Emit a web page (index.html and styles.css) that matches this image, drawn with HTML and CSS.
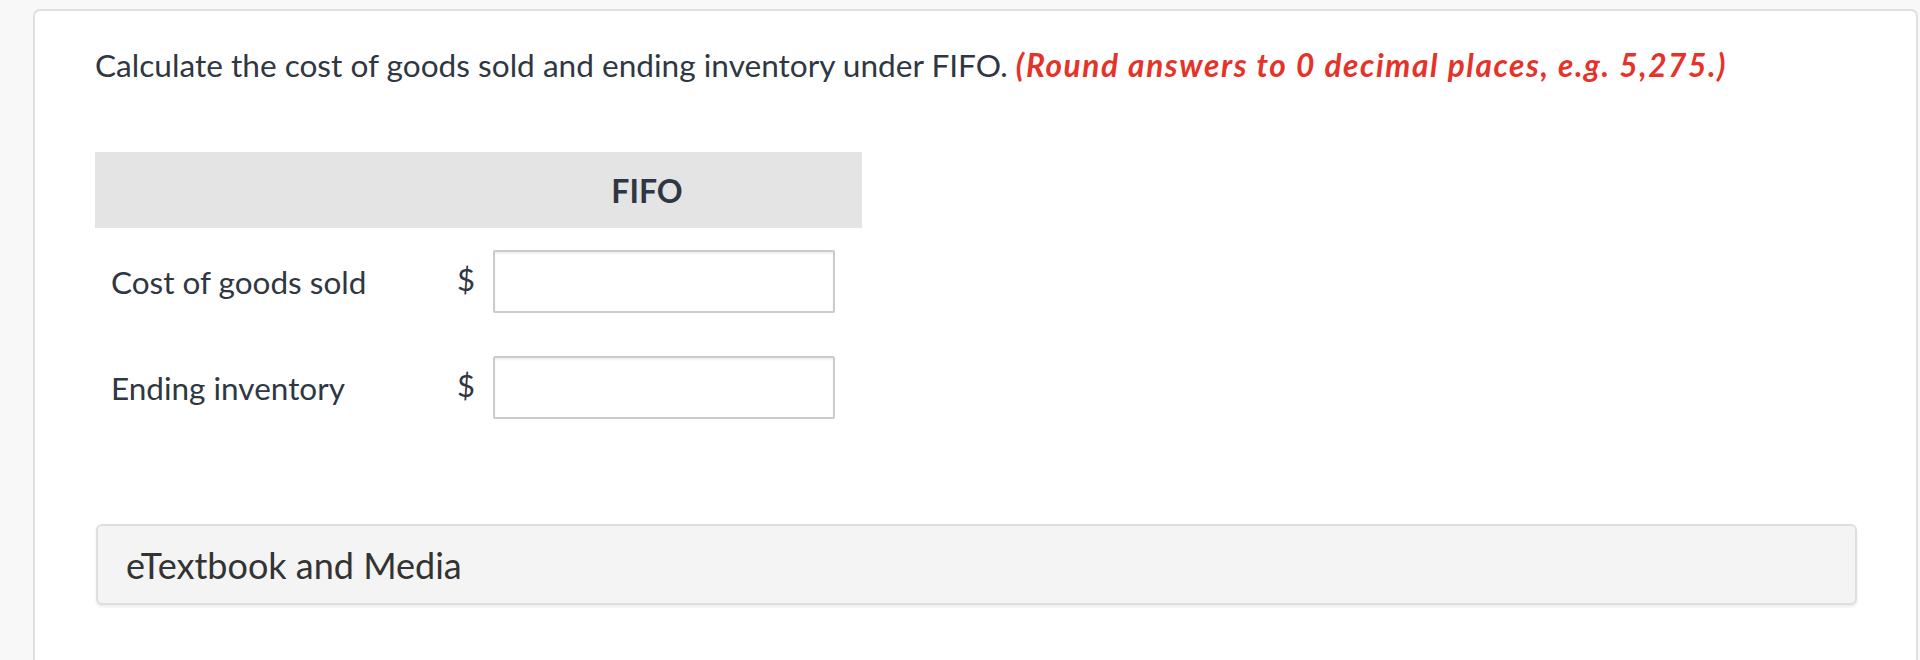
FILE: index.html
```html
<!DOCTYPE html>
<html lang="en">
<head>
<meta charset="utf-8">
<title>FIFO</title>
<link rel="stylesheet" href="styles.css">
</head>
<body>
<div class="page">
  <div class="card">
    <p class="question">Calculate the cost of goods sold and ending inventory under FIFO. <span class="hint">(Round answers to 0 decimal places, e.g. 5,275.)</span></p>
    <div class="table">
      <div class="head">
        <div class="head-label"></div>
        <div class="head-col">FIFO</div>
      </div>
      <div class="row">
        <div class="label">Cost of goods sold</div>
        <div class="cell"><span class="dollar">$</span><input class="field" type="text"></div>
      </div>
      <div class="row">
        <div class="label">Ending inventory</div>
        <div class="cell"><span class="dollar">$</span><input class="field" type="text"></div>
      </div>
    </div>
    <div class="media">eTextbook and Media</div>
  </div>
</div>
</body>
</html>
```
FILE: styles.css
```css
html, body {
  margin: 0;
  padding: 0;
  height: 100%;
  overflow: hidden;
}
body {
  background: #f8f8f8;
  font-family: Lato, "Open Sans", sans-serif;
  color: #2f3742;
}
.page {
  padding: 9px 2px 0 33px;
  height: 100%;
  box-sizing: border-box;
}
.card {
  background: #fff;
  border: 2px solid #e0e0e0;
  border-bottom: none;
  border-radius: 7px 7px 0 0;
  height: 100%;
  box-sizing: border-box;
  padding: 0 58px 0 60px;
}
.question {
  margin: 0;
  padding-top: 34px;
  font-size: 31.6px;
  line-height: 40px;
  white-space: nowrap;
}
.hint {
  color: #e6332a;
  font-weight: bold;
  font-style: italic;
  letter-spacing: 1.6px;
}
.table {
  width: 767px;
  margin-top: 67px;
}
.head {
  display: grid;
  grid-template-columns: 345px 422px;
  height: 76px;
  background: #e4e4e4;
  align-items: center;
}
.head-col {
  text-align: center;
  font-weight: bold;
  font-size: 32px;
  padding-right: 8px;
}
.row {
  display: grid;
  grid-template-columns: 345px 422px;
  align-items: center;
  padding: 22px 0 21px;
}
.label {
  padding-left: 16px;
  font-size: 31.5px;
}
.cell {
  display: flex;
  align-items: center;
  padding-left: 17px;
}
.dollar {
  font-size: 31px;
  width: 18px;
  margin-right: 18px;
  position: relative;
  top: -3px;
}
.field {
  width: 342px;
  height: 63px;
  box-sizing: border-box;
  border: 2px solid #cbcbcb;
  border-radius: 2px;
  box-shadow: inset 0 2px 2px rgba(0,0,0,0.06);
  background: #fff;
  margin: 0;
  padding: 0 10px;
  font: inherit;
}
.media {
  margin-top: 84px;
  margin-left: 1px;
  width: 1761px;
  height: 81px;
  box-sizing: border-box;
  background: #f4f4f4;
  border: 2px solid #dedede;
  border-radius: 6px;
  box-shadow: 0 2px 3px rgba(0,0,0,0.08);
  display: flex;
  align-items: center;
  padding-left: 28px;
  font-size: 36px;
  color: #333;
}
```
